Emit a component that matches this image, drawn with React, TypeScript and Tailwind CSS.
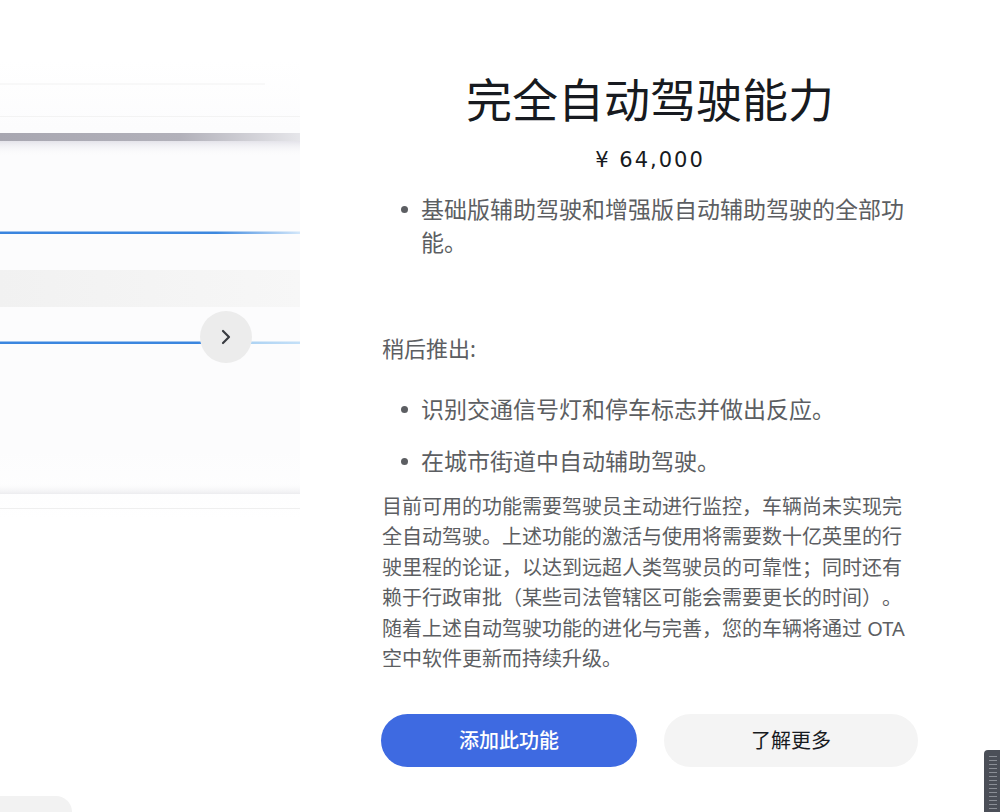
import { ChevronRight } from "lucide-react";

const FONT = "font-['Noto_Sans','Noto_Sans_CJK_SC',sans-serif]";

function Dot() {
  return (
    <div className="w-[39px] shrink-0 flex pt-[13px] pl-[19px]">
      <span className="block w-[7px] h-[7px] rounded-full bg-[#5c5e62]" />
    </div>
  );
}

function Bullet({ text }: { text: string }) {
  return (
    <li className="flex">
      <Dot />
      <span className="flex-1 text-[23px] leading-[33px] text-[#5c5e62]">
        {text}
      </span>
    </li>
  );
}

// the render on the left, drawn as a picture
function PreviewArt() {
  return (
    <div className="relative w-[300px] h-[812px] shrink-0">
      <svg width="300" height="812" viewBox="0 0 300 812">
        <defs>
          <linearGradient id="greyBar" x1="0" x2="1" y1="0" y2="0">
            <stop offset="0" stopColor="#a8a7b1" />
            <stop offset="0.6" stopColor="#b2b1ba" />
            <stop offset="1" stopColor="#e6e6ea" />
          </linearGradient>
          <linearGradient id="haze" x1="0" x2="0" y1="0" y2="1">
            <stop offset="0" stopColor="#e4e3ea" />
            <stop offset="1" stopColor="#ffffff" stopOpacity="0" />
          </linearGradient>
          <linearGradient id="blue1" x1="0" x2="1" y1="0" y2="0">
            <stop offset="0" stopColor="#3a84de" />
            <stop offset="0.72" stopColor="#3d88df" />
            <stop offset="1" stopColor="#d3e7fa" />
          </linearGradient>
          <linearGradient id="blue2" x1="0" x2="1" y1="0" y2="0">
            <stop offset="0" stopColor="#3b86df" />
            <stop offset="0.66" stopColor="#3b86df" />
            <stop offset="0.8" stopColor="#a9d0f2" />
            <stop offset="1" stopColor="#c4e0f8" />
          </linearGradient>
          <linearGradient id="band" x1="0" x2="1" y1="0" y2="0">
            <stop offset="0" stopColor="#f1f1f1" />
            <stop offset="1" stopColor="#f7f7f7" />
          </linearGradient>
          <linearGradient id="panel" x1="0" x2="0" y1="0" y2="1">
            <stop offset="0" stopColor="#ffffff" />
            <stop offset="0.15" stopColor="#fcfcfd" />
            <stop offset="0.85" stopColor="#fcfcfd" />
            <stop offset="1" stopColor="#ffffff" />
          </linearGradient>
          <linearGradient id="bottomShade" x1="0" x2="0" y1="0" y2="1">
            <stop offset="0" stopColor="#ffffff" stopOpacity="0" />
            <stop offset="1" stopColor="#ececef" />
          </linearGradient>
        </defs>
        <rect x="0" y="60" width="300" height="460" fill="url(#panel)" />
        <rect x="0" y="83.5" width="265" height="1" fill="#f2f2f2" />
        <rect x="0" y="116" width="300" height="1" fill="#f3f3f3" />
        <rect x="0" y="141" width="300" height="16" fill="url(#haze)" />
        <rect x="0" y="133" width="300" height="8" fill="url(#greyBar)" />
        <rect x="0" y="231.5" width="300" height="2.5" fill="url(#blue1)" />
        <rect x="0" y="270" width="300" height="37" fill="url(#band)" />
        <rect x="0" y="341.5" width="300" height="2.5" fill="url(#blue2)" />
        <rect x="0" y="482" width="300" height="12" fill="url(#bottomShade)" />
        <rect x="0" y="508" width="300" height="1" fill="#efefef" />
      </svg>
      <button className="absolute left-[200px] top-[311px] w-[52px] h-[52px] rounded-full bg-[#ececec] flex items-center justify-center">
        <ChevronRight size={24} strokeWidth={2.2} color="#393c41" />
      </button>
      <div className="absolute left-0 bottom-0 w-[72px] h-[16px] bg-[#f2f2f2] rounded-tr-[28px]" />
    </div>
  );
}

export default function App() {
  return (
    <div
      className={`relative w-[1000px] h-[812px] overflow-hidden bg-white flex ${FONT} [text-spacing-trim:space-all]`}
    >
      <PreviewArt />
      <div className="ml-[82px] w-[536px] flex flex-col pt-[76px]">
        <h1 className="text-[46px] leading-[46px] text-center text-[#171a20] font-normal">
          完全自动驾驶能力
        </h1>
        <p className="mt-[27px] text-[21px] leading-[22px] text-center text-[#171a20] tracking-[2px] font-['DejaVu_Sans',sans-serif]">
          ¥ 64,000
        </p>
        <ul className="mt-[22px]">
          <Bullet text="基础版辅助驾驶和增强版自动辅助驾驶的全部功能。" />
        </ul>
        <p className="mt-[74px] text-[22px] leading-[30px] text-[#5c5e62]">
          稍后推出:
        </p>
        <ul className="mt-[30px] flex flex-col gap-[19px]">
          <Bullet text="识别交通信号灯和停车标志并做出反应。" />
          <Bullet text="在城市街道中自动辅助驾驶。" />
        </ul>
        <p className="mt-[14px] text-[20px] leading-[30.4px] text-[#5c5e62]">
          目前可用的功能需要驾驶员主动进行监控，车辆尚未实现完全自动驾驶。上述功能的激活与使用将需要数十亿英里的行驶里程的论证，以达到远超人类驾驶员的可靠性；同时还有赖于行政审批（某些司法管辖区可能会需要更长的时间）。随着上述自动驾驶功能的进化与完善，您的车辆将通过 OTA 空中软件更新而持续升级。
        </p>
        <div className="mt-[40px] flex gap-[27px] -ml-[1px]">
          <button className="w-[256px] h-[53px] rounded-full bg-[#3e6ae1] text-white text-[20px] font-medium">
            添加此功能
          </button>
          <button className="w-[254px] h-[53px] rounded-full bg-[#f4f4f4] text-[#171a20] text-[20px]">
            了解更多
          </button>
        </div>
      </div>
      <div className="absolute right-0 top-[750px] w-[16px] h-[62px] bg-[#4b4f58] rounded-tl-[4px] flex flex-col gap-[3px] pt-[6px] pl-[5px]">
        {Array.from({ length: 14 }).map((_, i) => (
          <span key={i} className="block w-[8px] h-[1px] bg-[#8a8e96]" />
        ))}
      </div>
    </div>
  );
}
